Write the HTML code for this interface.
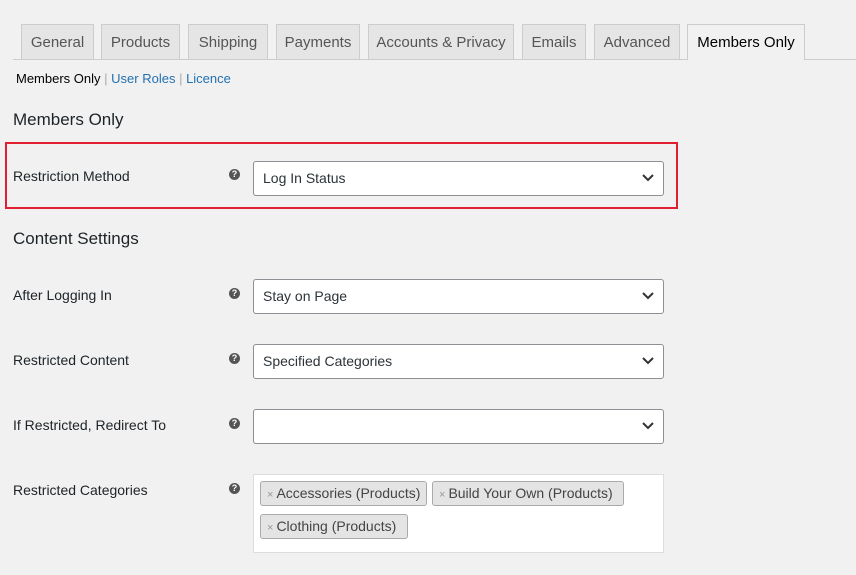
<html><head><style>
body{margin:0;width:856px;height:575px;background:#f1f1f1;font-family:"Liberation Sans",sans-serif;color:#23282d;position:relative;overflow:hidden}
.a{position:absolute}
.tab{position:absolute;top:24px;height:35px;background:#e5e5e5;border:1px solid #ccc;border-bottom:none;font-size:15px;color:#555;text-align:center;line-height:36px;box-sizing:border-box;white-space:nowrap}
.lbl{position:absolute;left:13px;font-size:14px;color:#1d2327}
.q{position:absolute;left:229px;width:11px;height:11px;border-radius:50%;background:#555;color:#fff;font-size:9px;font-weight:bold;text-align:center;line-height:11px}
.sel{position:absolute;left:253px;width:411px;height:35px;background:#fff;border:1px solid #8c8f94;border-radius:3px;box-sizing:border-box;font-size:14px;line-height:33px;padding-left:9px;color:#2c3338}
.sel svg{position:absolute;right:9px;top:12px}
h2{position:absolute;margin:0;font-size:17px;font-weight:normal;color:#1d2327;left:13px}
.chip{position:absolute;height:25px;background:#e4e4e4;border:1px solid #aaa;border-radius:3px;box-sizing:border-box;font-size:14px;line-height:23px;padding:0 6px;color:#444;white-space:nowrap;overflow:hidden}
.chip span{color:#999;font-size:11px;margin-right:3px}
</style></head><body>
<div class="a" style="left:13px;top:59px;width:843px;height:1px;background:#ccc"></div>
<div class="tab" style="left:21px;width:73px">General</div>
<div class="tab" style="left:101px;width:79px">Products</div>
<div class="tab" style="left:188px;width:80px">Shipping</div>
<div class="tab" style="left:276px;width:84px">Payments</div>
<div class="tab" style="left:368px;width:146px">Accounts &amp; Privacy</div>
<div class="tab" style="left:522px;width:64px">Emails</div>
<div class="tab" style="left:594px;width:86px">Advanced</div>
<div class="tab" style="left:687px;width:118px;height:36px;background:#f1f1f1;color:#000">Members Only</div>
<div class="a" style="left:16px;top:71px;font-size:13px;color:#000">Members Only <span style="color:#aaa">|</span><span style="color:#2271b1"> User Roles </span><span style="color:#aaa">|</span><span style="color:#2271b1"> Licence</span></div>
<h2 style="top:110px">Members Only</h2>
<div class="a" style="left:5px;top:142px;width:673px;height:67px;border:2px solid #e02030;box-sizing:border-box"></div>
<div class="lbl" style="top:168px">Restriction Method</div>
<div class="q" style="top:169px">?</div>
<div class="sel" style="top:161px">Log In Status<svg width="12" height="8"><path d="M1 1l5 5 5-5" stroke="#333" stroke-width="2" fill="none"/></svg></div>
<h2 style="top:229px">Content Settings</h2>
<div class="lbl" style="top:287px">After Logging In</div>
<div class="q" style="top:288px">?</div>
<div class="sel" style="top:279px">Stay on Page<svg width="12" height="8"><path d="M1 1l5 5 5-5" stroke="#333" stroke-width="2" fill="none"/></svg></div>
<div class="lbl" style="top:352px">Restricted Content</div>
<div class="q" style="top:353px">?</div>
<div class="sel" style="top:344px">Specified Categories<svg width="12" height="8"><path d="M1 1l5 5 5-5" stroke="#333" stroke-width="2" fill="none"/></svg></div>
<div class="lbl" style="top:417px">If Restricted, Redirect To</div>
<div class="q" style="top:418px">?</div>
<div class="sel" style="top:409px"><svg width="12" height="8"><path d="M1 1l5 5 5-5" stroke="#333" stroke-width="2" fill="none"/></svg></div>
<div class="lbl" style="top:482px">Restricted Categories</div>
<div class="q" style="top:483px">?</div>
<div class="a" style="left:253px;top:474px;width:411px;height:79px;background:#fff;border:1px solid #ddd;box-sizing:border-box"></div>
<div class="chip" style="left:260px;top:481px;width:167px"><span>×</span>Accessories (Products)</div>
<div class="chip" style="left:432px;top:481px;width:192px"><span>×</span>Build Your Own (Products)</div>
<div class="chip" style="left:260px;top:514px;width:148px"><span>×</span>Clothing (Products)</div>
</body></html>
